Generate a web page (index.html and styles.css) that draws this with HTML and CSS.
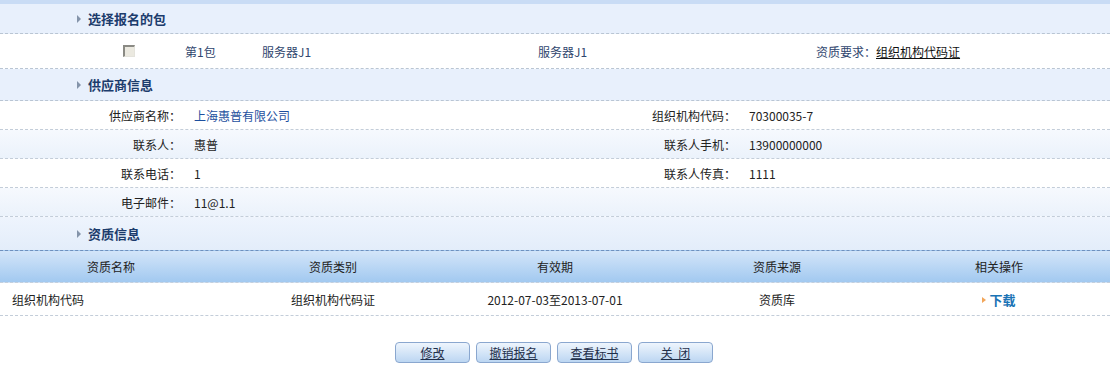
FILE: index.html
```html
<!DOCTYPE html>
<html lang="zh-CN">
<head>
  <meta charset="UTF-8" />
  <title>报名信息</title>
  <link rel="stylesheet" href="styles.css">
</head>
<body>
  <div class="page">
    <div class="sec-title sec-first"><span class="arrow"></span>选择报名的包</div>

    <div class="pkg-row">
      <div class="pkg-check"><span class="check"></span></div>
      <div>第1包</div>
      <div>服务器J1</div>
      <div>服务器J1</div>
      <div>资质要求：<a href="#" class="req">组织机构代码证</a></div>
    </div>

    <div class="sec-title sec-second"><span class="arrow"></span>供应商信息</div>

    <div class="info-row">
      <div class="label">供应商名称：</div>
      <div class="value company">上海惠普有限公司</div>
      <div class="label">组织机构代码：</div>
      <div class="value">70300035-7</div>
    </div>
    <div class="info-row alt">
      <div class="label">联系人：</div>
      <div class="value">惠普</div>
      <div class="label">联系人手机：</div>
      <div class="value">13900000000</div>
    </div>
    <div class="info-row">
      <div class="label">联系电话：</div>
      <div class="value">1</div>
      <div class="label">联系人传真：</div>
      <div class="value">1111</div>
    </div>
    <div class="info-row alt">
      <div class="label">电子邮件：</div>
      <div class="value">11@1.1</div>
      <div class="label"></div>
      <div class="value"></div>
    </div>

    <div class="sec-title sec-third"><span class="arrow"></span>资质信息</div>

    <div class="qual-head">
      <div>资质名称</div>
      <div>资质类别</div>
      <div>有效期</div>
      <div>资质来源</div>
      <div>相关操作</div>
    </div>
    <div class="qual-row">
      <div class="left">组织机构代码</div>
      <div>组织机构代码证</div>
      <div>2012-07-03至2013-07-01</div>
      <div>资质库</div>
      <div><a href="#" class="download"><span class="dl-icon"></span>下载</a></div>
    </div>

    <div class="buttons">
      <button>修改</button>
      <button>撤销报名</button>
      <button>查看标书</button>
      <button>关&nbsp;&nbsp;闭</button>
    </div>
  </div>
</body>
</html>
```

FILE: styles.css
```css
* {
  margin: 0;
  padding: 0;
  box-sizing: border-box;
}

body {
  background: #fff;
  color: #222;
  font-family: "Noto Sans CJK SC", "Liberation Sans", sans-serif;
  font-size: 12px;
}

a {
  color: inherit;
}

.page {
  width: 1110px;
  border-top: 4px solid #c9dcf5;
}

/* section titles */
.sec-title {
  display: flex;
  align-items: center;
  padding-left: 77px;
  background: #e8f0fc;
  border-bottom: 1px dashed #b9c5d3;
  font-size: 13px;
  font-weight: 700;
  color: #1c3c6c;
}

.sec-first {
  height: 30px;
}

.sec-second {
  height: 32px;
}

.sec-third {
  height: 33px;
  background: linear-gradient(#eef4fd, #e3edfa);
  border-bottom: none;
}

.arrow {
  width: 0;
  height: 0;
  border-top: 4px solid transparent;
  border-bottom: 4px solid transparent;
  border-left: 4px solid #8494aa;
  margin-right: 7px;
}

/* package row */
.pkg-row {
  display: grid;
  grid-template-columns: 185px 77px 276px 278px 1fr;
  align-items: center;
  height: 35px;
  border-bottom: 1px dashed #b9c5d3;
  color: #30466e;
}

.pkg-check {
  padding-left: 123px;
  display: flex;
}

.check {
  width: 12px;
  height: 12px;
  background: #ebe9e0;
  border-top: 2px solid #8a8a84;
  border-left: 2px solid #8a8a84;
  border-right: 1px solid #e4e3dc;
  border-bottom: 1px solid #e4e3dc;
}

.req {
  color: #111;
  text-decoration: underline;
}

/* supplier info */
.info-row {
  display: grid;
  grid-template-columns: 185px 370px 185px 370px;
  align-items: center;
  height: 29px;
  border-bottom: 1px dashed #c3cdd9;
}

.info-row.alt {
  background: linear-gradient(#f6f9fe, #ebf2fb);
}

.label {
  text-align: right;
  padding-right: 4px;
  color: #222;
}

.value {
  padding-left: 9px;
  color: #222;
}

.company {
  color: #1d4f9e;
}

/* qualification table */
.qual-head,
.qual-row {
  display: grid;
  grid-template-columns: repeat(5, 1fr);
  align-items: center;
  text-align: center;
}

.qual-head {
  height: 33px;
  background: linear-gradient(#d3e5f9, #a2c9f0);
  border-top: 1px dashed #6f90bd;
  border-bottom: 1px dashed #c3cfdd;
  color: #222;
}

.qual-row {
  height: 33px;
  border-bottom: 1px dashed #c3cdd9;
}

.qual-row .left {
  text-align: left;
  padding-left: 12px;
}

.download {
  display: inline-flex;
  align-items: center;
  text-decoration: none;
  color: #1a73b5;
  font-weight: 700;
  font-size: 13px;
}

.dl-icon {
  width: 0;
  height: 0;
  border-top: 3px solid transparent;
  border-bottom: 3px solid transparent;
  border-left: 4px solid #f2a65a;
  margin-right: 3px;
}

/* buttons */
.buttons {
  display: flex;
  justify-content: center;
  gap: 6px;
  padding: 26px 0 0 0;
  margin-left: -2px;
}

.buttons button {
  width: 75px;
  height: 21px;
  border: 1px solid #8aa7cf;
  border-radius: 4px;
  background: linear-gradient(#eef5fd, #bcd6f2);
  font-family: "Noto Sans CJK SC", sans-serif;
  font-size: 12px;
  color: #1f2f4a;
  text-decoration: underline;
  cursor: pointer;
}
```
